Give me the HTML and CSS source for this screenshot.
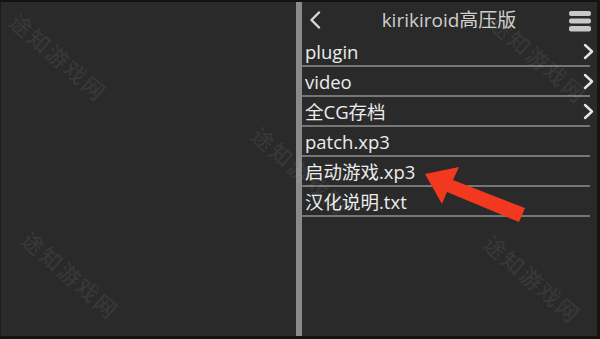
FILE: index.html
```html
<!DOCTYPE html>
<html lang="zh">
<head>
<meta charset="utf-8">
<title>kirikiroid</title>
<link rel="stylesheet" href="styles.css">
</head>
<body>
<div class="screen">
  <div class="left"></div>
  <div class="divider"></div>
  <div class="right">
    <div class="header">
      <svg class="back" width="12" height="18" viewBox="0 0 12 18"><polyline points="10,1.5 2.5,9 10,16.5" fill="none" stroke="#d8d8d8" stroke-width="2.4" stroke-linecap="round" stroke-linejoin="round"/></svg>
      <div class="title">kirikiroid高压版</div>
      <svg class="menu" width="22" height="21" viewBox="0 0 22 21"><rect x="0" y="0" width="22" height="5" rx="2" fill="#c8c8c8"/><rect x="0" y="7.5" width="22" height="5" rx="2" fill="#c8c8c8"/><rect x="0" y="15" width="22" height="5.5" rx="2" fill="#c8c8c8"/></svg>
    </div>
    <div class="list">
      <div class="row"><span class="name">plugin</span><svg class="chev" width="11" height="17" viewBox="0 0 11 17"><polyline points="2,2 9,8.5 2,15" fill="none" stroke="#e6e6e6" stroke-width="2.4" stroke-linecap="round" stroke-linejoin="round"/></svg></div>
      <div class="row"><span class="name">video</span><svg class="chev" width="11" height="17" viewBox="0 0 11 17"><polyline points="2,2 9,8.5 2,15" fill="none" stroke="#e6e6e6" stroke-width="2.4" stroke-linecap="round" stroke-linejoin="round"/></svg></div>
      <div class="row"><span class="name">全CG存档</span><svg class="chev" width="11" height="17" viewBox="0 0 11 17"><polyline points="2,2 9,8.5 2,15" fill="none" stroke="#e6e6e6" stroke-width="2.4" stroke-linecap="round" stroke-linejoin="round"/></svg></div>
      <div class="row"><span class="name">patch.xp3</span></div>
      <div class="row"><span class="name">启动游戏.xp3</span></div>
      <div class="row"><span class="name">汉化说明.txt</span></div>
    </div>
  </div>
  <span class="wm wm1">途知游戏网</span>
  <span class="wm wm2">途知游戏网</span>
  <span class="wm wm3">途知游戏网</span>
  <span class="wm wm4">途知游戏网</span>
  <span class="wm wm5">途知游戏网</span>
  <svg class="arrow" width="600" height="339" viewBox="0 0 600 339"><polygon points="425,174 459,167 453,180 525,208 519,222 447,192 442,204" fill="#f2381e"/></svg>
</div>
</body>
</html>
```

FILE: styles.css
```css
html, body {
  margin: 0;
  padding: 0;
  background: #111;
}
.screen {
  position: relative;
  width: 600px;
  height: 339px;
  box-sizing: border-box;
  background: #2a2a2a;
  border-top: 2px solid #121212;
  border-bottom: 3px solid #121212;
  border-right: 3px solid #151515;
  border-left: 1px solid #1c1c1c;
  display: flex;
  overflow: hidden;
  font-family: "Open Sans", "Noto Sans", "Noto Sans CJK SC", sans-serif;
}
.left {
  width: 295px;
  flex: none;
}
.divider {
  width: 6px;
  flex: none;
  background: #8a8a8a;
}
.right {
  flex: 1;
  display: flex;
  flex-direction: column;
}
.header {
  height: 35px;
  flex: none;
  display: flex;
  align-items: center;
  padding: 0 6px 0 7px;
  box-sizing: border-box;
}
.back {
  flex: none;
  margin-top: 1px;
}
.title {
  flex: 1;
  text-align: center;
  color: #cfcfcf;
  font-size: 19px;
  line-height: 1;
  margin-left: 8px;
  margin-top: 1px;
}
.menu {
  flex: none;
  margin-top: 3px;
}
.list {
  display: flex;
  flex-direction: column;
  padding-right: 7px;
}
.row {
  height: 30px;
  box-sizing: border-box;
  border-bottom: 2px solid #767676;
  display: flex;
  align-items: center;
  justify-content: space-between;
  padding-left: 3px;
}
.name {
  color: #ececec;
  font-size: 18.5px;
  line-height: 1;
  margin-top: 2px;
}
.chev {
  flex: none;
  margin-right: -4px;
}
.wm {
  position: absolute;
  font-family: "Noto Sans CJK SC", sans-serif;
  font-weight: 500;
  font-size: 22px;
  letter-spacing: 2px;
  color: rgba(255, 255, 255, 0.075);
  white-space: nowrap;
  transform: translate(-50%, -50%) rotate(41deg);
  line-height: 1;
}
.wm1 { left: 58px; top: 54px; }
.wm2 { left: 300px; top: 168px; }
.wm3 { left: 70px; top: 272px; }
.wm4 { left: 538px; top: 56px; }
.wm5 { left: 532px; top: 276px; }
.arrow {
  position: absolute;
  left: -1px;
  top: -2px;
  pointer-events: none;
}
```
